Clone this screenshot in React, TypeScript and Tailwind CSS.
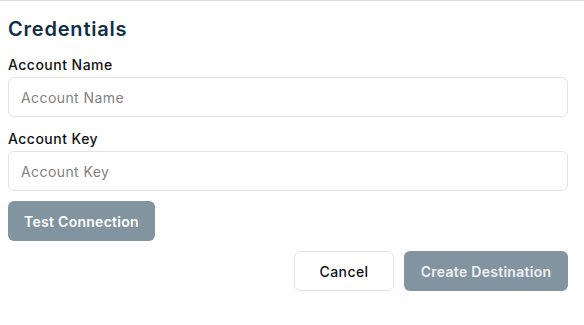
export default function App() {
  return (
    <div className="min-h-[325px] w-[584px] border-t border-[#dcdcdc] bg-white pl-2 pr-4 pt-[14px] font-['Inter',sans-serif] tracking-[0.03em]">
      <h2 className="text-[20px] font-semibold leading-7 tracking-[0.04em] text-[#0f2f47]">Credentials</h2>
      <div className="mt-[12px] flex flex-col">
        <label className="text-[14px] font-medium leading-5 text-[#111]">Account Name</label>
        <input
          placeholder="Account Name"
          className="mt-[2px] h-10 rounded-md border border-[#e3e3e3] px-3 text-[14px] tracking-[0.03em] text-[#111] outline-none placeholder:text-[#828282]"
        />
        <label className="mt-[12px] text-[14px] font-medium leading-5 text-[#111]">Account Key</label>
        <input
          placeholder="Account Key"
          className="mt-[2px] h-10 rounded-md border border-[#e3e3e3] px-3 text-[14px] tracking-[0.03em] text-[#111] outline-none placeholder:text-[#828282]"
        />
      </div>
      <button className="mt-[10px] h-10 w-[147px] rounded-md bg-[#8394a1] text-[14px] font-semibold tracking-[0.02em] text-white">
        Test Connection
      </button>
      <div className="mt-[10px] flex justify-end gap-[10px]">
        <button className="h-10 w-[100px] rounded-md border border-[#e3e3e3] bg-white text-[14px] font-medium tracking-[0.03em] text-[#111]">
          Cancel
        </button>
        <button className="h-10 w-[164px] rounded-md bg-[#8394a1] text-[14px] font-semibold tracking-[0.02em] text-[#eef1f3]">
          Create Destination
        </button>
      </div>
    </div>
  )
}
